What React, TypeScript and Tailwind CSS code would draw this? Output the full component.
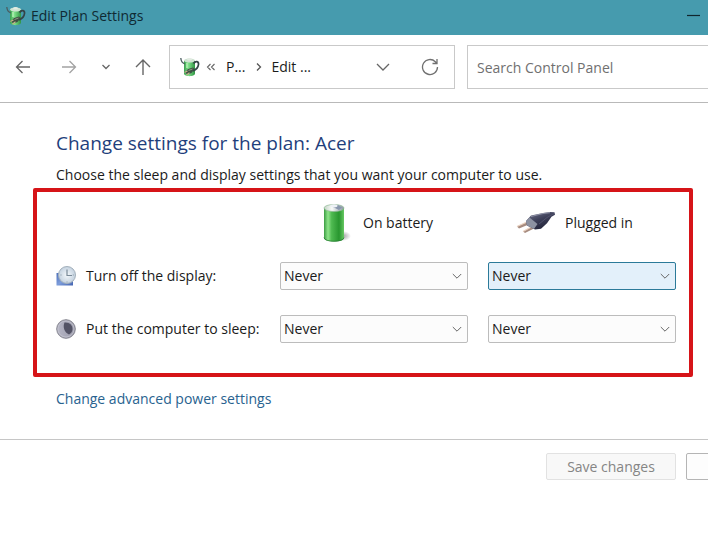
import { useState } from 'react';

type RowProps = {
  id: string;
  label: string;
  icon: React.ReactNode;
  activePlugged?: boolean;
};

const TIMEOUTS = ['Never', '1 minute', '5 minutes', '10 minutes', '30 minutes', '1 hour'];

export default function App() {
  return (
    <div className="min-h-screen overflow-hidden bg-white font-['Open_Sans','Noto_Sans',sans-serif] text-sm leading-5 text-[#1b1b1b]">
      <header className="flex h-[35px] items-center bg-[#469bae] pb-1 pl-1.5 pr-2">
        <PlanIcon className="size-5 shrink-0" />
        <h1 className="ml-[5px] flex-1 text-[#0f2a33]">Edit Plan Settings</h1>
        <button type="button" aria-label="Minimize" className="flex h-7 items-center">
          <svg width="13" height="9" viewBox="0 0 13 9">
            <path d="M0 4.5h13" stroke="#10262d" strokeWidth="1.2" />
          </svg>
        </button>
      </header>

      <nav className="flex h-[68px] items-center border-b border-[#b9b9b9] pb-[3px] pl-[15px]">
        <div className="flex w-[154px] items-center">
          <button type="button" aria-label="Back">
            <svg width="16" height="16" viewBox="0 0 16 16" fill="none" stroke="#666" strokeWidth="1.3">
              <path d="M15 8H1.5M7.5 2 1.5 8l6 6" />
            </svg>
          </button>
          <button type="button" aria-label="Forward" className="ml-[30px]">
            <svg width="16" height="16" viewBox="0 0 16 16" fill="none" stroke="#a3a3a3" strokeWidth="1.3">
              <path d="M1 8h13.5M8.5 2l6 6-6 6" />
            </svg>
          </button>
          <button type="button" aria-label="Recent locations" className="ml-6">
            <svg width="10" height="8" viewBox="0 0 10 8" fill="none" stroke="#666" strokeWidth="1.3">
              <path d="m1.5 2 3.500 3.500L8.500 2" />
            </svg>
          </button>
          <button type="button" aria-label="Up" className="ml-6">
            <svg width="16" height="18" viewBox="0 0 16 18" fill="none" stroke="#666" strokeWidth="1.4">
              <path d="M8 17V2M1 9l7-7 7 7" />
            </svg>
          </button>
        </div>

        <div className="flex h-11 flex-1 items-center border border-[#c9c9c9] pl-2.5">
          <PlanIcon className="size-5 shrink-0" />
          <svg className="ml-1.5" width="10" height="8" viewBox="0 0 10 8" fill="none" stroke="#666" strokeWidth="1.1">
            <path d="M4.5 1 1.5 4l3 3M8.500 1l-3 3 3 3" />
          </svg>
          <a href="#power" className="ml-2.5">P...</a>
          <svg className="ml-2.5" width="8" height="10" viewBox="0 0 8 10" fill="none" stroke="#555" strokeWidth="1.3">
            <path d="m2 1.500 3.500 3.500L2 8.500" />
          </svg>
          <a href="#edit" className="ml-2">Edit ...</a>
          <button type="button" aria-label="Previous locations" className="ml-auto">
            <svg width="14" height="10" viewBox="0 0 14 10" fill="none" stroke="#666" strokeWidth="1.3">
              <path d="m1 2 6 6 6-6" />
            </svg>
          </button>
          <button type="button" aria-label="Refresh" className="ml-[31px] mr-[15px]">
            <svg width="18" height="18" viewBox="0 0 18 18" fill="none" stroke="#707070" strokeWidth="1.3">
              <path d="M16.500 9a7.500 7.500 0 1 1-2.200-5.300L16 5.400M16 1v4.500h-4.500" />
            </svg>
          </button>
        </div>

        <input
          type="search"
          aria-label="Search Control Panel"
          placeholder="Search Control Panel"
          className="ml-3 h-11 w-[241px] shrink-0 border border-r-0 border-[#c9c9c9] px-[9px] outline-none placeholder:text-[#707070]"
        />
      </nav>

      <main>
        <div className="px-14 pt-7">
          <h2 className="text-[19px] leading-6 text-[#1f3f7c]">Change settings for the plan: Acer</h2>
          <p className="mt-2.5">Choose the sleep and display settings that you want your computer to use.</p>
        </div>

        <section className="ml-[33px] mr-[15px] mt-[3px] rounded-xs border-4 border-[#d61418] pb-[30px] pl-[19px] pr-[13px] pt-[7px]">
          <div className="grid grid-cols-[204px_1fr_1fr] items-center gap-x-5">
            <div className="col-start-2 flex h-12 items-center pl-10">
              <BatteryIcon />
              <span className="ml-[11px]">On battery</span>
            </div>
            <div className="flex h-12 items-center pl-7">
              <PlugIcon />
              <span className="ml-[9px]">Plugged in</span>
            </div>
          </div>
          <div className="mt-[15px] grid gap-[25px]">
            <SettingRow id="display" label="Turn off the display:" icon={<ClockIcon />} activePlugged />
            <SettingRow id="sleep" label="Put the computer to sleep:" icon={<MoonIcon />} />
          </div>
        </section>

        <p className="px-14 pb-[30px] pt-3">
          <a href="#advanced" className="text-[#28628f]">Change advanced power settings</a>
        </p>
      </main>

      <footer className="-mr-[108px] flex justify-end gap-2.5 border-t border-[#c6c6c6] pt-[13px]">
        <button
          type="button"
          disabled
          className="h-[27px] w-[130px] rounded-xs border border-[#e2e2e2] bg-[#f8f8f8] text-[#858585]"
        >
          Save changes
        </button>
        <button
          type="button"
          aria-label="Cancel"
          className="h-[27px] w-[130px] rounded-xs border border-[#b5b5b5] bg-[#fdfdfd]"
        />
      </footer>
    </div>
  );
}

function SettingRow({ id, label, icon, activePlugged }: RowProps) {
  return (
    <div className="grid grid-cols-[204px_1fr_1fr] items-center gap-x-5">
      <label htmlFor={`${id}-battery`} className="flex items-center gap-2.5 whitespace-nowrap">
        {icon}
        {label}
      </label>
      <TimeoutSelect id={`${id}-battery`} label={`${label} on battery`} />
      <TimeoutSelect id={`${id}-plugged`} label={`${label} plugged in`} active={activePlugged} />
    </div>
  );
}

function TimeoutSelect({ id, label, active }: { id: string; label: string; active?: boolean }) {
  const [value, setValue] = useState('Never');

  return (
    <div className="relative">
      <select
        id={id}
        aria-label={label}
        value={value}
        onChange={(e) => setValue(e.target.value)}
        className={`block h-7 w-full appearance-none rounded-xs border pl-[3px] pr-6 outline-none ${
          active ? 'border-[#2b7a99] bg-[#e3f0fa]' : 'border-[#bcbcbc] bg-[#fcfcfc]'
        }`}
      >
        {TIMEOUTS.map((t) => (
          <option key={t}>{t}</option>
        ))}
      </select>
      <svg
        className="pointer-events-none absolute right-1.5 top-2.5"
        width="10"
        height="8"
        viewBox="0 0 10 8"
        fill="none"
        stroke="#666"
        strokeWidth="1"
      >
        <path d="m.8 2 4.200 4.200L9.200 2" />
      </svg>
    </div>
  );
}

// small battery with a power cord wrapped around it
function PlanIcon({ className }: { className?: string }) {
  return (
    <svg className={className} viewBox="0 0 20 20" fill="none">
      <defs>
        <linearGradient id="planBody" x1="0" x2="1">
          <stop offset="0" stopColor="#3aa050" />
          <stop offset=".4" stopColor="#7fe08a" />
          <stop offset="1" stopColor="#2f9443" />
        </linearGradient>
      </defs>
      <path d="M4 3.500v13c0 3.500 11 3.500 11 0v-13Z" fill="url(#planBody)" />
      <ellipse cx="9.500" cy="3.500" rx="5.500" ry="2" fill="#cfe3d2" />
      <ellipse cx="9.500" cy="2.200" rx="2.500" ry="1.300" fill="#e3ece3" />
      <path d="M7 6v5" stroke="#b6f3b6" strokeWidth="1.500" />
      <path d="M.8 1c.2 3 1.200 5 4 5.800" stroke="#4b5d60" strokeWidth="1.300" />
      <path d="M13.500 6.500c2-3 5.500-2.500 5 1.200-.4 3-2.300 5-5.500 6.300" stroke="#344447" strokeWidth="1.700" />
      <path d="m5 15.500 3-3.500 5-1.500 1.500 1.500-3 4-4 1.500Z" fill="#3f5044" />
      <path d="m4.500 15.500 3-1.500M6.500 18l3-2.200" stroke="#c5b38b" strokeWidth="1.200" />
      <path d="m8.500 13.500 4-1.500" stroke="#a5aa92" strokeWidth=".8" />
    </svg>
  );
}

function BatteryIcon() {
  return (
    <svg width="32" height="40" viewBox="0 0 32 40">
      <defs>
        <linearGradient id="cell" x1="0" x2="1">
          <stop offset="0" stopColor="#3c9d43" />
          <stop offset=".2" stopColor="#8ee489" />
          <stop offset=".38" stopColor="#4fba51" />
          <stop offset=".75" stopColor="#28962f" />
          <stop offset="1" stopColor="#66c862" />
        </linearGradient>
        <radialGradient id="cellShade">
          <stop offset="0" stopColor="#8a8a8a" stopOpacity=".8" />
          <stop offset="1" stopColor="#8a8a8a" stopOpacity="0" />
        </radialGradient>
        <linearGradient id="cellCap" x1="0" x2="1">
          <stop offset="0" stopColor="#c3d4c5" />
          <stop offset=".4" stopColor="#f8faf9" />
          <stop offset="1" stopColor="#8996a0" />
        </linearGradient>
      </defs>
      <ellipse cx="23" cy="33" rx="8" ry="5" fill="url(#cellShade)" />
      <path d="M4 5v30c0 4.700 20 4.700 20 0V5Z" fill="url(#cell)" />
      <path d="M4 34.500c0 5 20 5 20 0" fill="none" stroke="#287b35" strokeWidth=".8" />
      <ellipse cx="14" cy="5" rx="10" ry="3.500" fill="url(#cellCap)" stroke="#91b997" strokeWidth=".7" />
      <path d="M12 3.500 18 2l4 2.500-3 2.500Z" fill="#8896ad" />
      <ellipse cx="14" cy="2.800" rx="3.500" ry="1.600" fill="#edf1f5" />
    </svg>
  );
}

function PlugIcon() {
  return (
    <svg width="40" height="24" viewBox="0 0 40 24">
      <defs>
        <linearGradient id="plugBody" x1="0" y1="0" x2=".6" y2="1">
          <stop offset="0" stopColor="#777a91" />
          <stop offset=".5" stopColor="#3e405a" />
          <stop offset="1" stopColor="#222338" />
        </linearGradient>
      </defs>
      <path d="m1 15.500 11-5 2 2.500-11 4.500Z" fill="#a78c80" />
      <path d="m7 20.500 10-5.500 2 2-10 5Z" fill="#a78c80" />
      <path d="m1 15.500 11-5M7 20.500l10-5.500" stroke="#ead2c1" strokeWidth="1.300" />
      <path d="m10 10 5-5.500 12-2.500 7-1 4.500.3.500 2.500-3.500 2-4.500 6.500-6 5.500-6 .8-8-4Z" fill="url(#plugBody)" />
      <path d="m10 10.500 3.500-4 8 6.500-3.500 5-7-3.500Z" fill="#8d92a2" />
      <path d="m15 5.500 12-3 7-.8" fill="none" stroke="#9fa2b5" strokeWidth=".8" />
      <path d="m23 13 8-6.500 7-4" fill="none" stroke="#50516b" strokeWidth="1" />
    </svg>
  );
}

function ClockIcon() {
  return (
    <svg className="shrink-0" width="20" height="20" viewBox="0 0 20 20">
      <defs>
        <linearGradient id="screen" x1="0" y1="0" x2="1" y2="1">
          <stop offset="0" stopColor="#4c6fb9" />
          <stop offset=".5" stopColor="#7d9ddb" />
          <stop offset="1" stopColor="#4262b0" />
        </linearGradient>
        <radialGradient id="dial">
          <stop offset="0" stopColor="#f4f8fb" />
          <stop offset="1" stopColor="#c3d1df" />
        </radialGradient>
      </defs>
      <path d="M.5 7h16.500v12.500H.5Z" fill="url(#screen)" />
      <circle cx="11" cy="9" r="8.500" fill="url(#dial)" stroke="#a3b0bb" />
      <path d="M11 3.500V9.500h5" fill="none" stroke="#7a8a98" strokeWidth="1.200" />
      <path d="M4.500 9h1M11 15.500v1M16.800 9h1" stroke="#8999a5" />
    </svg>
  );
}

function MoonIcon() {
  return (
    <svg className="shrink-0" width="20" height="20" viewBox="0 0 20 20">
      <defs>
        <linearGradient id="moon" x1="0" x2="1">
          <stop offset="0" stopColor="#b7b7c6" />
          <stop offset="1" stopColor="#9a9aaa" />
        </linearGradient>
      </defs>
      <circle cx="10" cy="10" r="9.300" fill="url(#moon)" stroke="#85858f" />
      <circle cx="10" cy="10" r="8" fill="none" stroke="#c3c3ce" strokeWidth=".8" />
      <path d="M8.500 3.500c5-.5 8.500 3 8 7-.2 2-1.500 4-3.500 5C8.500 13.500 6.500 8 8.500 3.500Z" fill="#535365" />
    </svg>
  );
}
